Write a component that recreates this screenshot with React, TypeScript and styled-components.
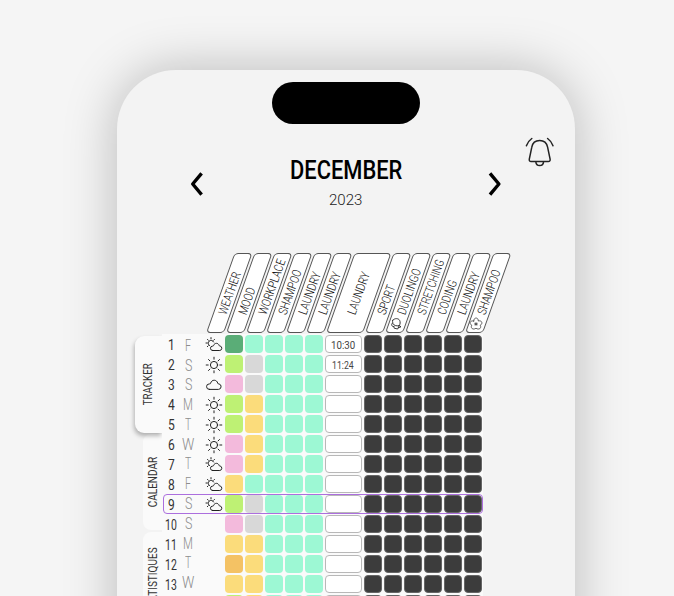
import React, { useLayoutEffect, useRef, useState } from "react";
import styled, { createGlobalStyle, css } from "styled-components";

const Global = createGlobalStyle`
  * { box-sizing: border-box; }
  body { margin: 0; background: #f5f5f5; font-family: Roboto, "Liberation Sans", sans-serif; overflow: hidden; }
`;

const Stage = styled.main`
  height: 596px;
  overflow: hidden;
  padding: 70px 0 0 117px;
  background: #f5f5f5;
`;

const Phone = styled.section`
  position: relative;
  width: 458px;
  height: 900px;
  border-radius: 59px;
  background: #f3f3f3;
  box-shadow: 0 0 52px rgba(0, 0, 0, 0.25);
  padding-top: 12px;
`;

const Island = styled.div`
  width: 148px;
  height: 42px;
  margin-left: 155px;
  border-radius: 21px;
  background: #000;
`;

const BellButton = styled.button`
  position: absolute;
  left: 407px;
  top: 65px;
  width: 31px;
  height: 33px;
  padding: 0;
  border: 0;
  background: none;
`;

const MonthBar = styled.header`
  display: flex;
  justify-content: space-between;
  align-items: flex-start;
  height: 129px;
  padding: 38px 73px 0 72px;
`;

const ArrowButton = styled.button`
  width: 14px;
  height: 24px;
  margin-top: 10px;
  padding: 0;
  border: 0;
  background: none;
`;

const Heading = styled.div`
  display: flex;
  flex-direction: column;
  align-items: center;
  gap: 15px;
  width: 120px;
`;

const FitBox = styled.span<{ $w: number; $size: number; $weight: number; $color: string }>`
  display: block;
  width: ${(p) => p.$w}px;
  height: ${(p) => p.$size * 0.711}px;
  line-height: ${(p) => p.$size * 0.711}px;
  font-size: ${(p) => p.$size}px;
  font-weight: ${(p) => p.$weight};
  color: ${(p) => p.$color};
  white-space: nowrap;
`;

const FitInner = styled.span`
  display: inline-block;
  vertical-align: top;
  transform-origin: 0 50%;
`;

type FitProps = { width: number; size: number; weight?: number; color?: string; children: string | number };

/** Text condensed horizontally to an exact width. */
function Fit({ width, size, weight = 400, color = "#222", children }: FitProps) {
  const ref = useRef<HTMLSpanElement>(null);
  const [scale, setScale] = useState(1);
  useLayoutEffect(() => {
    if (ref.current) setScale(width / ref.current.offsetWidth);
  }, [width, children]);
  return (
    <FitBox $w={width} $size={size} $weight={weight} $color={color}>
      <FitInner ref={ref} style={{ transform: `scaleX(${scale})` }}>{children}</FitInner>
    </FitBox>
  );
}

const HeaderRow = styled.div`
  display: flex;
  gap: 2px;
  height: 80px;
  margin-left: 89.4px;
`;

const HeaderCell = styled.div<{ $wide?: boolean }>`
  position: relative;
  flex: none;
  width: ${(p) => (p.$wide ? 36.8 : 18)}px;
  height: 80px;
`;

const Slant = styled.div`
  height: 80px;
  border: 1px solid #555;
  border-radius: 4px;
  background: #fff;
  transform: skewX(-19.6deg);
  transform-origin: 0 100%;
`;

const SlantLabel = styled.div<{ $wide?: boolean }>`
  position: absolute;
  left: ${(p) => (p.$wide ? 29.3 : 20.8)}px;
  bottom: 17.2px;
  transform: rotate(-70.4deg);
  transform-origin: 0 100%;
`;

const SlantIcon = styled.div`
  position: absolute;
  left: 4px;
  bottom: 2px;
  width: 14px;
  height: 14px;
`;

const Body = styled.div`
  display: flex;
  margin: 1px 0 0 18px;
`;

const Tabs = styled.nav`
  display: flex;
  flex-direction: column;
  align-items: flex-end;
  width: 27px;
  padding-top: 2px;
  gap: 2px;
`;

const Tab = styled.div<{ $active?: boolean }>`
  display: flex;
  align-items: center;
  justify-content: center;
  width: 19px;
  height: 96px;
  border-radius: 8px 0 0 8px;
  background: #fafafa;
  ${(p) =>
    p.$active &&
    css`
      width: 27px;
      height: 97px;
      margin-bottom: -1px;
      padding-right: 2px;
      border-radius: 9px 0 0 9px;
      box-shadow: -1px 3px 4px rgba(0, 0, 0, 0.27);
      z-index: 1;
    `}
`;

const TabLabel = styled.div<{ $w: number }>`
  flex: none;
  width: ${(p) => p.$w}px;
  transform: rotate(-90deg);
`;

const Sheet = styled.div`
  position: relative;
  z-index: 2;
  display: flex;
  width: 321px;
  height: 420px;
  padding-top: 1px;
  background: #fafafa;
`;

const DayColumn = styled.div`
  display: grid;
  grid-auto-rows: 20px;
  align-content: start;
  align-items: center;
  justify-items: center;
  width: 18px;
`;

const NumberColumn = styled(DayColumn)`
  padding-top: 0.5px;
`;

const LetterColumn = styled(DayColumn)`
  grid-auto-rows: 19.8px;
  width: 16px;
  padding-top: 0.5px;
`;

const IconColumn = styled(DayColumn)`
  margin-left: 9px;
`;

const Cells = styled.div`
  display: grid;
  grid-template-columns: repeat(5, 18px) 36.6px repeat(6, 18px);
  grid-auto-rows: 18px;
  gap: 2px;
  margin: 0.3px 0 0 2px;
  align-content: start;
`;

const Cell = styled.div<{ $fill: string }>`
  border-radius: 4px;
  background: ${(p) => p.$fill};
  ${(p) => p.$fill === DARK && css`border: 0.5px solid #666;`}
`;

const TimeCell = styled.div`
  display: flex;
  align-items: center;
  justify-content: center;
  padding-top: 1px;
  border: 1px solid #b8b8b8;
  border-radius: 4px;
  background: #fff;
`;

const Today = styled.div`
  position: absolute;
  left: 1px;
  top: 160px;
  width: 320px;
  height: 20px;
  border: 1.4px solid #ac6fde;
  border-radius: 4px;
`;

const Drawing = styled.svg`
  display: block;
  width: 100%;
  height: 100%;
  fill: none;
  stroke: #222;
  stroke-linecap: round;
  stroke-linejoin: round;
`;

const WeatherBox = styled.div`
  width: 18px;
  height: 18px;
`;

const DARK = "#3c3c3c";
const MINT = "#9df8d4";
const GREEN = "#5aad77";
const LIME = "#bef174";
const PINK = "#f3badc";
const YELLOW = "#fbdc7b";
const ORANGE = "#f4c264";
const GRAY = "#d8d8d8";

const headers = [
  { label: "WEATHER", w: 44.5 },
  { label: "MOOD", w: 28 },
  { label: "WORKPLACE", w: 58 },
  { label: "SHAMPOO", w: 47 },
  { label: "LAUNDRY", w: 44.5 },
  { label: "LAUNDRY", w: 44.5 },
  { label: "LAUNDRY", w: 44.5, wide: true },
  { label: "SPORT", w: 31 },
  { label: "DUOLINGO", w: 48, icon: "owl" },
  { label: "STRETCHING", w: 57.5 },
  { label: "CODING", w: 36 },
  { label: "LAUNDRY", w: 44.5 },
  { label: "SHAMPOO", w: 47, icon: "flower" },
];

type Weather = "mixed" | "sun" | "cloud";
type Day = { letter?: string; weather?: Weather; first: string; mood: string; time?: string };

const days: Day[] = [
  { letter: "F", weather: "mixed", first: GREEN, mood: MINT, time: "10:30" },
  { letter: "S", weather: "sun", first: LIME, mood: GRAY, time: "11:24" },
  { letter: "S", weather: "cloud", first: PINK, mood: GRAY },
  { letter: "M", weather: "sun", first: LIME, mood: YELLOW },
  { letter: "T", weather: "sun", first: LIME, mood: YELLOW },
  { letter: "W", weather: "sun", first: PINK, mood: YELLOW },
  { letter: "T", weather: "mixed", first: PINK, mood: YELLOW },
  { letter: "F", weather: "mixed", first: YELLOW, mood: MINT },
  { letter: "S", weather: "mixed", first: LIME, mood: GRAY },
  { letter: "S", first: PINK, mood: GRAY },
  { letter: "M", first: YELLOW, mood: YELLOW },
  { letter: "T", first: ORANGE, mood: YELLOW },
  { letter: "W", first: YELLOW, mood: YELLOW },
  { first: LIME, mood: YELLOW },
];

const letterWidth: Record<string, number> = { F: 6, S: 7, M: 10, T: 6.5, W: 12 };

function WeatherIcon({ kind }: { kind?: Weather }) {
  if (!kind) return <WeatherBox />;
  return (
    <WeatherBox>
      <Drawing viewBox="0 0 18 18" strokeWidth="1">
        {kind === "sun" && (
          <>
            <circle cx="9" cy="9" r="3.6" />
            <path d="M9 1.2v2M9 14.8v2M1.2 9h2M14.8 9h2M3.5 3.5l1.4 1.4M13.1 13.1l1.4 1.4M3.5 14.5l1.4-1.4M13.1 4.9l1.4-1.4" />
          </>
        )}
        {kind === "cloud" && (
          <path d="M4.3 13.4h9.2a2.8 2.8 0 0 0 .5-5.5c-.8-.1-1 .1-1.2-.5C12 3.2 6.6 3.3 5.7 7c-.2.9-.5.8-1.4.9a2.75 2.75 0 0 0 0 5.5z" />
        )}
        {kind === "mixed" && (
          <>
            <path d="M7.6 14.5h7.2a2.3 2.3 0 0 0 .3-4.5c-.7 0-.8-.1-1-.6-.8-2.8-4.6-2.7-5.4-.1-.2.6-.4.7-1 .8a2.2 2.2 0 0 0-.1 4.4z" />
            <path d="M4.5 9.7A2.9 2.9 0 1 1 8.7 6M6 1.6v1.3M1 7h1.3M2.5 3.4l.9.9M9.5 3.4l-.9.9M2.3 10.7l.9-.9" />
          </>
        )}
      </Drawing>
    </WeatherBox>
  );
}

function HeaderIcon({ kind }: { kind: string }) {
  return (
    <SlantIcon>
      <Drawing viewBox="0 0 14 14" strokeWidth="0.9">
        {kind === "owl" ? (
          <path d="M3.8 3.2C5.500 1 9.500 1 10.700 3.500c.7 1.500.6 3.500-.4 5-2.800 1-5.800-.2-6.500-2.200-.3-1-.4-2.200 0-3.100zM3.500 6C2 7.500 2.300 9.700 4.800 9.500M4.800 9.500l.4 1.700 3.500.8L10.300 8.500l1.700 1.300-2.300.8" />
        ) : (
          <>
            <path strokeWidth="0.7" d="M4.7 4c-.2-4 4.8-4 4.6 0 3.6-1 5 2.7 1.9 4.3 1.8 2.9-1.5 5-4.2 2.900-2.700 2.100-6 0-4.200-2.900C-.3 6.700 1.100 3 4.700 4z" />
            <path strokeWidth="0.7" d="M7 5.600v2.800M5.700 6.400l2.600 1.300M8.300 6.400L5.700 7.700" />
          </>
        )}
      </Drawing>
    </SlantIcon>
  );
}

export default function App() {
  const labelled = days.filter((d) => d.letter);
  return (
    <>
      <Global />
      <Stage>
        <Phone>
          <Island />
          <BellButton aria-label="Notifications">
            <Drawing viewBox="0 0 31 33" strokeWidth="1.5">
              <path d="M15.7 5.5c-4.3 0-7.2 2.6-7.9 6.7L5.3 24.1c-.3 1.5.4 2.4 1.8 2.4h17.2c1.4 0 2.1-.9 1.8-2.4l-2.5-11.9c-.8-4.1-3.6-6.7-7.9-6.7zM11.8 26.7c.4 5.1 7.4 5.1 7.8 0M7.8 3.5Q4 6.2 2.4 10.7M23.6 3.5Q27.4 6.2 29 10.7" />
            </Drawing>
          </BellButton>
          <MonthBar>
            <ArrowButton aria-label="Previous month">
              <Drawing viewBox="0 0 14 24" strokeWidth="3.4"><path d="M12.6 1.3L3.7 12l8.9 10.7" stroke="#000" strokeLinecap="butt" /></Drawing>
            </ArrowButton>
            <Heading>
              <Fit width={112} size={25} weight={500} color="#000">DECEMBER</Fit>
              <Fit width={33} size={15.5} weight={300}>2023</Fit>
            </Heading>
            <ArrowButton aria-label="Next month">
              <Drawing viewBox="0 0 14 24" strokeWidth="3.4"><path d="M2 1.3L10.9 12 2 22.7" stroke="#000" strokeLinecap="butt" /></Drawing>
            </ArrowButton>
          </MonthBar>
          <HeaderRow>
            {headers.map((h, i) => (
              <HeaderCell key={i} $wide={h.wide}>
                <Slant />
                <SlantLabel $wide={h.wide}><Fit width={h.w} size={12.5} weight={300} color="#111">{h.label}</Fit></SlantLabel>
                {h.icon && <HeaderIcon kind={h.icon} />}
              </HeaderCell>
            ))}
          </HeaderRow>
          <Body>
            <Tabs>
              <Tab $active><TabLabel $w={42}><Fit width={42} size={12} color="#333">TRACKER</Fit></TabLabel></Tab>
              <Tab><TabLabel $w={50}><Fit width={50} size={12} color="#333">CALENDAR</Fit></TabLabel></Tab>
              <Tab><TabLabel $w={66}><Fit width={66} size={12} color="#333">STATISTIQUES</Fit></TabLabel></Tab>
            </Tabs>
            <Sheet>
              <NumberColumn>
                {labelled.map((_, i) => (
                  <Fit key={i} width={i < 9 ? 7 : 11.5} size={15.5} color="#333">{i + 1}</Fit>
                ))}
              </NumberColumn>
              <LetterColumn>
                {labelled.map((d, i) => (
                  <Fit key={i} width={letterWidth[d.letter!]} size={16} weight={300} color="#8c8c8c">{d.letter!}</Fit>
                ))}
              </LetterColumn>
              <IconColumn>{labelled.map((d, i) => <WeatherIcon key={i} kind={d.weather} />)}</IconColumn>
              <Cells>
                {days.map((d, i) => (
                  <React.Fragment key={i}>
                    <Cell $fill={d.first} />
                    <Cell $fill={d.mood} />
                    {[0, 1, 2].map((n) => <Cell key={n} $fill={MINT} />)}
                    <TimeCell>{d.time && <Fit width={d.time === "10:30" ? 24.5 : 22} size={11.5} color="#444">{d.time}</Fit>}</TimeCell>
                    {[0, 1, 2, 3, 4, 5].map((n) => <Cell key={n} $fill={DARK} />)}
                  </React.Fragment>
                ))}
              </Cells>
              <Today />
            </Sheet>
          </Body>
        </Phone>
      </Stage>
    </>
  );
}
